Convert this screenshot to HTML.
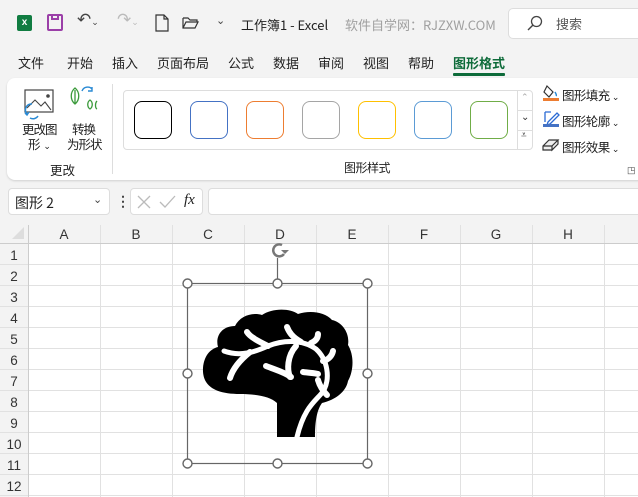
<!DOCTYPE html>
<html><head><meta charset="utf-8"><style>
*{margin:0;padding:0;box-sizing:border-box}
body{width:638px;height:497px;overflow:hidden;background:#f3f3f3;font-family:"Liberation Sans","Noto Sans CJK SC",sans-serif;color:#222;position:relative;font-size:13px}
.a{position:absolute;white-space:nowrap}
.cjk{font-family:"Noto Sans CJK SC","Liberation Sans",sans-serif}
.t{top:53px;font-size:13px}
</style></head><body>
<!-- title bar -->
<div class="a" style="left:17px;top:15px;width:15px;height:16px;background:#107c41;border-radius:2px;color:#fff;font-size:10px;font-weight:bold;text-align:center;line-height:16px">x</div>
<div class="a" style="left:47px;top:14px;width:16px;height:17px;border:2px solid #9b3fa8;border-radius:2px"></div>
<div class="a" style="left:51px;top:14px;width:8px;height:6px;border:2px solid #9b3fa8;border-top:none"></div>
<div class="a" style="left:77px;top:10px;font-size:17px;color:#444">↶<span style="font-size:9px">⌄</span></div>
<div class="a" style="left:117px;top:10px;font-size:17px;color:#bbb">↷<span style="font-size:9px">⌄</span></div>
<svg class="a" style="left:155px;top:14px" width="14" height="18"><path d="M1 1h8l4 4v12H1z M9 1v4h4" fill="none" stroke="#333" stroke-width="1.2"/></svg>
<svg class="a" style="left:182px;top:16px" width="18" height="14"><path d="M1 2h5l2 2h7v2 M1 2v10h12l3-6H4l-3 6" fill="none" stroke="#333" stroke-width="1.2"/></svg>
<div class="a" style="left:216px;top:14px;font-size:11px;color:#444">⌄</div>
<div class="a cjk" style="left:241px;top:15px;font-size:13px;color:#222">工作簿1 - Excel</div>
<div class="a cjk" style="left:345px;top:15px;font-size:13px;color:#a0a0a0">软件自学网：RJZXW.COM</div>
<div class="a" style="left:508px;top:8px;width:140px;height:31px;background:#fff;border:1px solid #ddd;border-radius:5px"></div>
<svg class="a" style="left:527px;top:15px" width="16" height="16"><circle cx="9.5" cy="6.5" r="5" fill="none" stroke="#444" stroke-width="1.3"/><path d="M6 10L1 15" stroke="#444" stroke-width="1.4"/></svg>
<div class="a cjk" style="left:556px;top:14px;font-size:13px;color:#555">搜索</div>
<!-- tabs -->
<div class="a cjk t" style="left:18px">文件</div>
<div class="a cjk t" style="left:67px">开始</div>
<div class="a cjk t" style="left:112px">插入</div>
<div class="a cjk t" style="left:157px">页面布局</div>
<div class="a cjk t" style="left:228px">公式</div>
<div class="a cjk t" style="left:273px">数据</div>
<div class="a cjk t" style="left:318px">审阅</div>
<div class="a cjk t" style="left:363px">视图</div>
<div class="a cjk t" style="left:408px">帮助</div>
<div class="a cjk t" style="left:453px;font-weight:bold;color:#0e6b3a">图形格式</div>
<div class="a" style="top:73px;left:453px;width:52px;height:3px;background:#0e6b3a;border-radius:1px"></div>
<!-- ribbon -->
<div class="a" style="left:7px;top:78px;width:640px;height:102px;background:#fff;border-radius:8px;box-shadow:0 1px 2px rgba(0,0,0,.15)"></div>
<svg class="a" style="left:20px;top:88px" width="40" height="36"><rect x="5" y="2" width="28" height="22" fill="none" stroke="#444" stroke-width="1.2"/><path d="M7 20l8-8 6 6 4-4 6 8" fill="none" stroke="#444" stroke-width="1.1"/><circle cx="28" cy="8" r="1.8" fill="#444"/><path d="M12 16a6 6 0 0 0 -5 10 M5 25l2 2 2-3 M10 30a6 6 0 0 0 8-2" fill="none" stroke="#2a8ad4" stroke-width="1.5"/></svg>
<svg class="a" style="left:67px;top:85px" width="34" height="30"><path d="M8 3c-5 4-5 12 0 16c5-4 5-12 0-16z M8 5v14" fill="none" stroke="#3a9a3a" stroke-width="1.3"/><path d="M15 6a6 6 0 0 1 10-2 M25 2v4h-4" fill="none" stroke="#2a8ad4" stroke-width="1.4"/><path d="M23 15c-3 2-3 7 0 9c3-2 3-7 0-9z M30 16c-2 2-2 7 0 8" fill="none" stroke="#3a9a3a" stroke-width="1.3"/></svg>
<div class="a cjk" style="left:22px;top:119px;font-size:12.5px;letter-spacing:-1px">更改图</div>
<div class="a cjk" style="left:28px;top:134px;font-size:12.5px">形 <span style="font-size:9px">⌄</span></div>
<div class="a cjk" style="left:72px;top:119px;font-size:12.5px;letter-spacing:-1px">转换</div>
<div class="a cjk" style="left:67px;top:134px;font-size:12.5px;letter-spacing:-1px">为形状</div>
<div class="a cjk" style="left:50px;top:160px;font-size:12.5px">更改</div>
<div class="a" style="left:112px;top:84px;width:1px;height:90px;background:#ddd"></div>
<div class="a" style="left:123px;top:90px;width:410px;height:60px;border:1px solid #ddd;border-radius:4px"></div>
<div class="a" style="left:517px;top:90px;width:1px;height:60px;background:#ddd"></div>
<div class="a" style="left:517px;top:110px;width:16px;height:1px;background:#ddd"></div>
<div class="a" style="left:517px;top:130px;width:16px;height:1px;background:#ddd"></div>
<div class="a" style="left:521px;top:92px;font-size:9px;color:#aaa">⌃</div>
<div class="a" style="left:521px;top:112px;font-size:10px;color:#333">⌄</div>
<div class="a" style="left:521px;top:130px;font-size:10px;color:#333">⩡</div>
<div class="a" style="left:134px;top:101px;width:38px;height:38px;border:1.5px solid #000;border-radius:8px"></div>
<div class="a" style="left:190px;top:101px;width:38px;height:38px;border:1px solid #4472c4;border-radius:8px"></div>
<div class="a" style="left:246px;top:101px;width:38px;height:38px;border:1px solid #ed7d31;border-radius:8px"></div>
<div class="a" style="left:302px;top:101px;width:38px;height:38px;border:1px solid #a5a5a5;border-radius:8px"></div>
<div class="a" style="left:358px;top:101px;width:38px;height:38px;border:1px solid #ffc000;border-radius:8px"></div>
<div class="a" style="left:414px;top:101px;width:38px;height:38px;border:1px solid #5b9bd5;border-radius:8px"></div>
<div class="a" style="left:470px;top:101px;width:38px;height:38px;border:1px solid #70ad47;border-radius:8px"></div>
<div class="a cjk" style="left:344px;top:159px;font-size:12px;letter-spacing:-0.5px">图形样式</div>
<svg class="a" style="left:542px;top:84px" width="18" height="18"><path d="M5 2l6 6-4 5-5-5z" fill="none" stroke="#333" stroke-width="1.2"/><path d="M13 8c1 2 2 3 1 4" stroke="#2a8ad4" stroke-width="1.5" fill="none"/><rect x="1" y="14" width="16" height="3" fill="#ed7d31"/></svg>
<svg class="a" style="left:542px;top:110px" width="18" height="18"><path d="M3 2h6 M3 2v10 M6 12l9-9 2 2-9 9-3 1z" fill="none" stroke="#2a6ad4" stroke-width="1.3"/><rect x="1" y="14" width="16" height="3" fill="#4472c4"/></svg>
<svg class="a" style="left:542px;top:138px" width="18" height="14"><path d="M1 8l6-6h9l-6 6v4H1z M10 8v4l6-6V2 M1 8h9" fill="#eee" stroke="#333" stroke-width="1.2"/></svg>
<div class="a cjk" style="left:562px;top:85px;font-size:12.5px;letter-spacing:-0.6px">图形填充 <span style="font-size:9px">⌄</span></div>
<div class="a cjk" style="left:562px;top:111px;font-size:12.5px;letter-spacing:-0.6px">图形轮廓 <span style="font-size:9px">⌄</span></div>
<div class="a cjk" style="left:562px;top:137px;font-size:12.5px;letter-spacing:-0.6px">图形效果 <span style="font-size:9px">⌄</span></div>
<div class="a" style="left:627px;top:165px;font-size:9px;color:#444">◳</div>
<!-- formula bar -->
<div class="a" style="left:8px;top:188px;width:102px;height:27px;background:#fff;border:1px solid #ddd;border-radius:4px"></div>
<div class="a cjk" style="left:15px;top:193px;font-size:14px">图形 2</div>
<div class="a" style="left:93px;top:193px;font-size:11px;color:#444">⌄</div>
<div class="a" style="left:116px;top:193px;font-size:14px;color:#444;font-weight:bold">⋮</div>
<div class="a" style="left:130px;top:188px;width:73px;height:27px;background:#fff;border:1px solid #ddd;border-radius:4px"></div>
<svg class="a" style="left:136px;top:194px" width="42" height="16"><path d="M2 2l12 12M14 2L2 14 M24 8l5 5 10-11" fill="none" stroke="#bbb" stroke-width="1.3"/></svg>
<div class="a" style="left:184px;top:192px;font-size:15px;font-style:italic;font-family:'Liberation Serif',serif">fx</div>
<div class="a" style="left:208px;top:188px;width:440px;height:27px;background:#fff;border:1px solid #ddd;border-radius:4px"></div>
<!-- grid -->
<svg class="a" style="left:0;top:225px" width="638" height="272">
<rect x="28" y="18" width="610" height="254" fill="#fff"/>
<g stroke="#e1e1e1" stroke-width="1">
<line x1="100.5" y1="0" x2="100.5" y2="272"/><line x1="172.5" y1="0" x2="172.5" y2="272"/><line x1="244.5" y1="0" x2="244.5" y2="272"/><line x1="316.5" y1="0" x2="316.5" y2="272"/><line x1="388.5" y1="0" x2="388.5" y2="272"/><line x1="460.5" y1="0" x2="460.5" y2="272"/><line x1="532.5" y1="0" x2="532.5" y2="272"/><line x1="604.5" y1="0" x2="604.5" y2="272"/>
<line x1="0" y1="39.5" x2="638" y2="39.5"/><line x1="0" y1="60.5" x2="638" y2="60.5"/><line x1="0" y1="81.5" x2="638" y2="81.5"/><line x1="0" y1="102.5" x2="638" y2="102.5"/><line x1="0" y1="123.5" x2="638" y2="123.5"/><line x1="0" y1="144.5" x2="638" y2="144.5"/><line x1="0" y1="165.5" x2="638" y2="165.5"/><line x1="0" y1="186.5" x2="638" y2="186.5"/><line x1="0" y1="207.5" x2="638" y2="207.5"/><line x1="0" y1="228.5" x2="638" y2="228.5"/><line x1="0" y1="249.5" x2="638" y2="249.5"/><line x1="0" y1="270.5" x2="638" y2="270.5"/>
</g>
<line x1="0" y1="18.5" x2="638" y2="18.5" stroke="#ccc"/><line x1="28.5" y1="0" x2="28.5" y2="272" stroke="#ccc"/>
<path d="M12 14L24 2V14z" fill="#ddd"/>
<g font-family="Liberation Sans" font-size="13.5" fill="#333" text-anchor="middle">
<text x="64" y="14">A</text><text x="136" y="14">B</text><text x="208" y="14">C</text><text x="280" y="14">D</text><text x="352" y="14">E</text><text x="424" y="14">F</text><text x="496" y="14">G</text><text x="568" y="14">H</text>
<text x="14" y="35">1</text><text x="14" y="56">2</text><text x="14" y="77">3</text><text x="14" y="98">4</text><text x="14" y="119">5</text><text x="14" y="140">6</text><text x="14" y="161">7</text><text x="14" y="182">8</text><text x="14" y="203">9</text><text x="14" y="224">10</text><text x="14" y="245">11</text><text x="14" y="266">12</text>
</g>
</svg>
<!-- shape -->
<svg class="a" style="left:0;top:0" width="638" height="497">
<path d="M277 437L277 403C270 396 255 394 240 394C215 394 202 386 203 368C204 356 210 349 218 347C215 336 222 326 235 326C240 316 252 312 262 315C272 308 290 308 298 314C310 310 325 312 332 320C342 322 350 333 348 345C354 355 354 370 348 381C346 392 335 400 322 403C316 411 315 425 315 437Z" fill="#000"/>
<g fill="none" stroke="#fff" stroke-width="6" stroke-linecap="round">
<path d="M224 351C240 357 255 352 268 346C283 340 302 339 316 349C328 360 330 378 324 390C318 400 305 404 297 437" stroke-width="5"/>
<path d="M250 352C240 360 233 368 230 378"/>
<path d="M268 346C258 341 250 337 247 332"/>
<path d="M301 342C292 337 289 332 287 327"/>
<path d="M311 343C316 341 318 338 318 334"/>
<path d="M296 346C287 356 287 370 290 377"/>
<path d="M266 366C276 370 284 372 291 377"/>
<path d="M333 351C332 356 328 360 323 361"/>
<path d="M303 372C310 373 315 373 318 374"/>
<path d="M318 380C320 387 324 392 327 395"/>
</g>
<g stroke="#666" stroke-width="1.2" fill="none">
<rect x="187.5" y="283.5" width="180" height="180"/>
<line x1="277.5" y1="258" x2="277.5" y2="283"/>
</g>
<path d="M282 245a6 6 0 1 0 2 9" fill="none" stroke="#777" stroke-width="2.5"/>
<path d="M281 250l4 4 4-4z" fill="#777"/>
<g fill="#fff" stroke="#666" stroke-width="1.4">
<circle cx="187.5" cy="283.5" r="4.5"/><circle cx="277.5" cy="283.5" r="4.5"/><circle cx="367.5" cy="283.5" r="4.5"/>
<circle cx="187.5" cy="373.5" r="4.5"/><circle cx="367.5" cy="373.5" r="4.5"/>
<circle cx="187.5" cy="463.5" r="4.5"/><circle cx="277.5" cy="463.5" r="4.5"/><circle cx="367.5" cy="463.5" r="4.5"/>
</g>
</svg>
</body></html>
